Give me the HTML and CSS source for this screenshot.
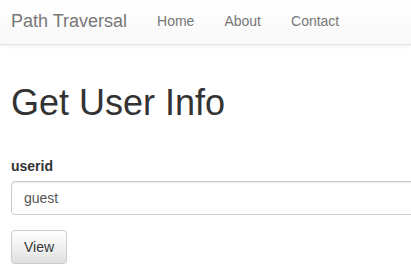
FILE: index.html
```html
<!DOCTYPE html>
<html>
<head>
<meta charset="utf-8">
<title>Path Traversal</title>
<link rel="stylesheet" href="styles.css">
</head>
<body>
<nav class="navbar">
  <a class="brand" href="#">Path Traversal</a>
  <ul class="nav">
    <li><a href="#">Home</a></li>
    <li><a href="#">About</a></li>
    <li><a href="#">Contact</a></li>
  </ul>
</nav>
<main class="container">
  <h1 class="title">Get User Info</h1>
  <form class="form">
    <label class="label" for="userid">userid</label>
    <input class="input" id="userid" type="text" value="guest">
    <button class="btn" type="button">View</button>
  </form>
</main>
</body>
</html>
```
FILE: styles.css
```css
html, body {
  margin: 0;
  padding: 0;
  overflow: hidden;
  background: #fff;
  font-family: "Liberation Sans", Arial, sans-serif;
  font-size: 14px;
  line-height: 20px;
  color: #333;
}
.navbar {
  display: flex;
  align-items: center;
  height: 42px;
  padding: 0 0 2px 11px;
  background: linear-gradient(to bottom, #fff 0, #f8f8f8 100%);
  border-bottom: 1px solid #e3e3e3;
  box-shadow: inset 0 1px 0 rgba(255,255,255,.15), 0 1px 5px rgba(0,0,0,.075);
}
.brand {
  font-size: 18px;
  line-height: 20px;
  color: #777;
  text-decoration: none;
  padding-right: 15px;
}
.nav {
  display: flex;
  list-style: none;
  margin: 0;
  padding: 0;
}
.nav a {
  display: block;
  padding: 0 15px;
  color: #777;
  text-decoration: none;
  font-size: 14px;
  line-height: 20px;
}
.container {
  padding-left: 11px;
  overflow: hidden;
}
.title {
  margin: 38px 0 0;
  font-size: 36px;
  font-weight: 500;
  line-height: 1.1;
  color: #333;
}
.form {
  display: flex;
  flex-direction: column;
  align-items: flex-start;
  margin-top: 33px;
}
.label {
  font-weight: bold;
  margin-bottom: 5px;
}
.input {
  box-sizing: border-box;
  width: 440px;
  height: 34px;
  padding: 6px 12px;
  font-family: inherit;
  font-size: 14px;
  line-height: 20px;
  color: #555;
  background: #fff;
  border: 1px solid #ccc;
  border-radius: 4px;
  box-shadow: inset 0 1px 1px rgba(0,0,0,.075);
  margin: 0;
}
.btn {
  margin-top: 15px;
  box-sizing: border-box;
  height: 34px;
  padding: 6px 12px;
  font-family: inherit;
  font-size: 14px;
  line-height: 20px;
  color: #333;
  background: linear-gradient(to bottom, #fff 0, #e0e0e0 100%);
  border: 1px solid #ccc;
  border-radius: 4px;
  box-shadow: inset 0 1px 0 rgba(255,255,255,.15), 0 1px 1px rgba(0,0,0,.075);
  text-shadow: 0 1px 0 #fff;
}
```
